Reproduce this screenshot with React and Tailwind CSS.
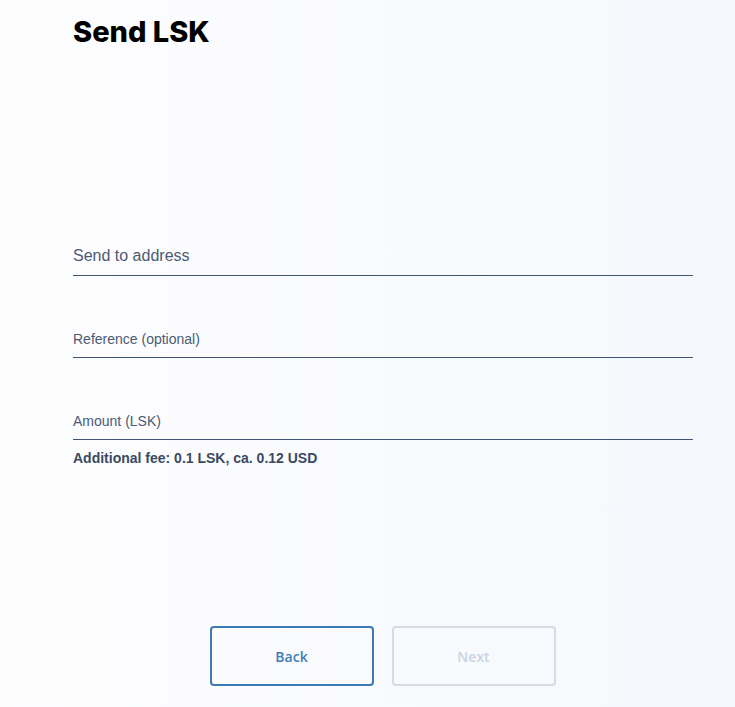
export default function App() {
  return (
    <div className="w-[735px] h-[707px] overflow-hidden bg-gradient-to-r from-[#fdfdfe] to-[#f6f8fd]">
      <div className="ml-[73px] w-[620px] flex flex-col">
        <h1 className="mt-[14px] text-[29px] leading-[36px] font-extrabold text-black" style={{ fontFamily: "Inter, 'Open Sans', sans-serif" }}>
          Send LSK
        </h1>
        <div className="mt-[197px] flex flex-col" style={{ fontFamily: "'Liberation Sans', Arial, sans-serif" }}>
          <div className="pb-[10px] border-b border-[#3e5470] text-[16px] leading-[18px] text-[#4b5b72]">Send to address</div>
          <div className="mt-[55px] pb-[10px] border-b border-[#3e5470] text-[14px] leading-[16px] text-[#4b5b72]">Reference (optional)</div>
          <div className="mt-[55px] pb-[10px] border-b border-[#3e5470] text-[14px] leading-[16px] text-[#4b5b72]">Amount (LSK)</div>
          <div className="mt-[11px] text-[14px] leading-[15px] font-bold text-[#3a4a62]">Additional fee: 0.1 LSK, ca. 0.12 USD</div>
        </div>
        <div className="mt-[160px] flex justify-center gap-[18px] pr-[1px]" style={{ fontFamily: "'Open Sans', sans-serif" }}>
          <button className="w-[164px] h-[60px] rounded-[4px] border-2 border-[#3a7cb8] text-[#3f7db6] text-[14px] font-semibold bg-transparent">Back</button>
          <button className="w-[164px] h-[60px] rounded-[4px] border-2 border-[#d3dde8] text-[#c8d4e2] text-[14px] font-semibold bg-transparent">Next</button>
        </div>
      </div>
    </div>
  );
}
